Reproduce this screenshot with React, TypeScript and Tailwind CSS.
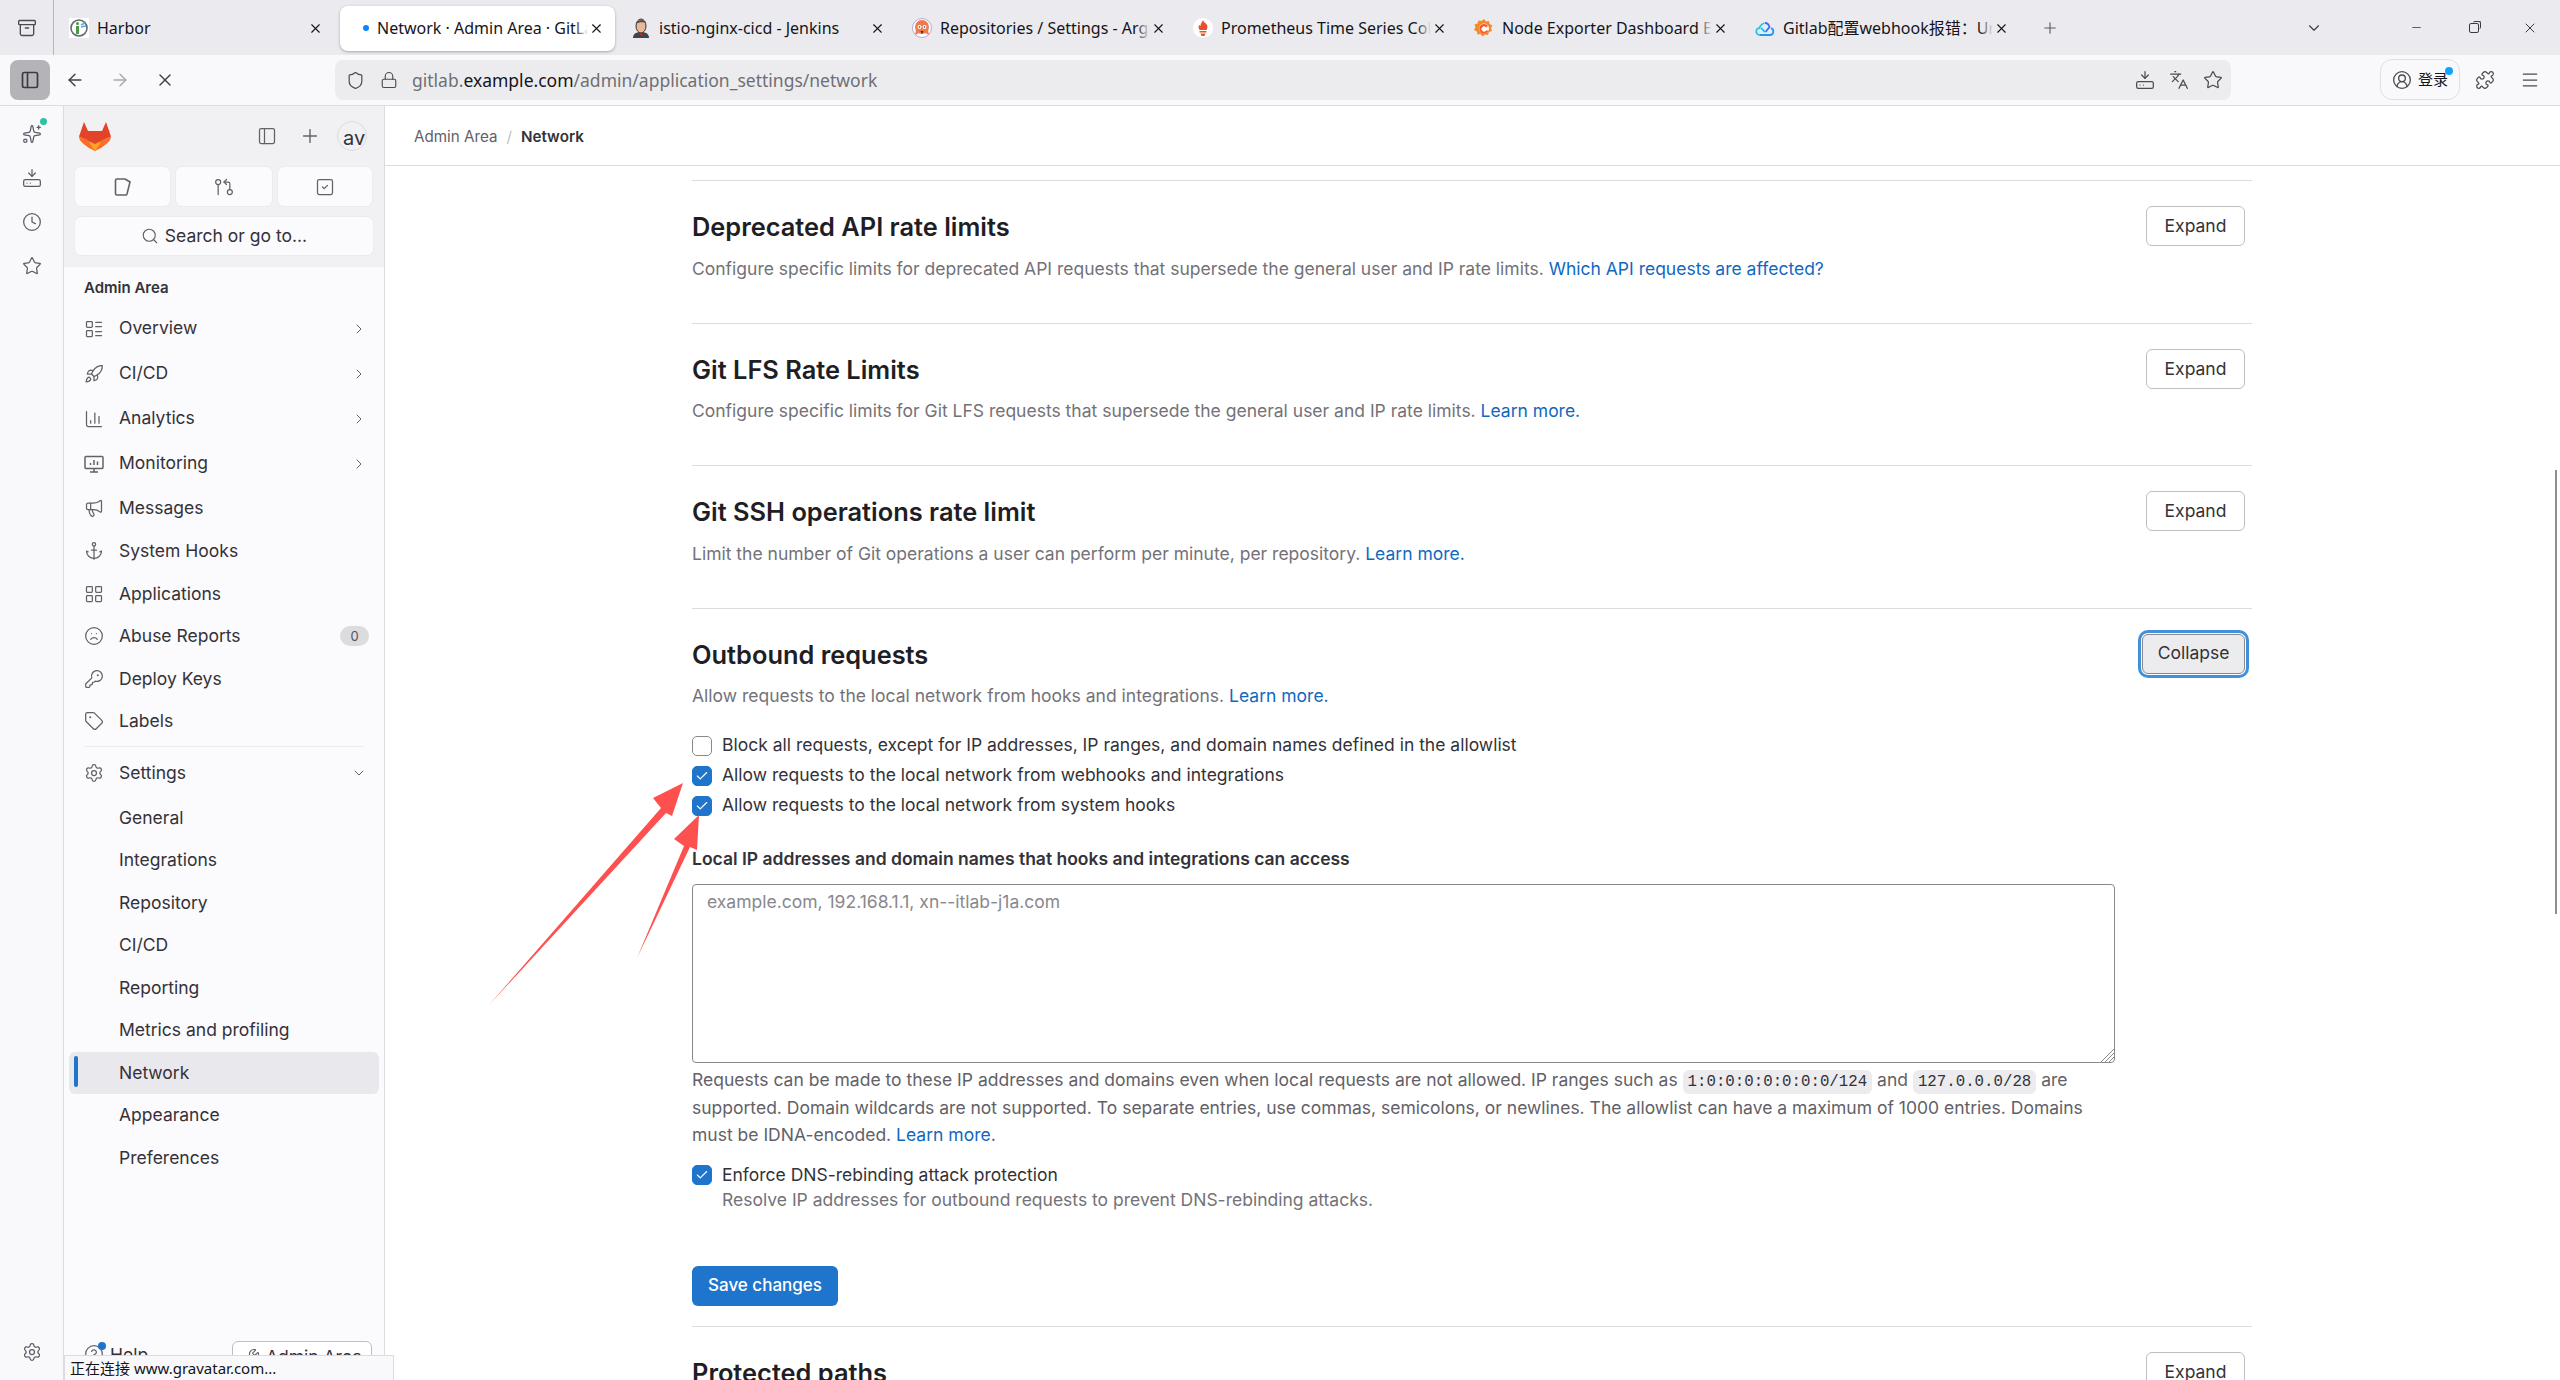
import React from 'react';
import {
  Anchor, Archive, ArrowLeft, ArrowRight, ChevronDown, ChevronRight, CircleUserRound, Clock, Frown,
  GitPullRequestArrow, HardDriveDownload, KeyRound, Languages, LayoutGrid, LayoutList, Lock, Megaphone,
  Menu, Minus, PanelLeft, Plus, Puzzle, Rocket, Search, Settings, Shield, Sparkles, SquareCheck,
  Star, Tag, X, ChartColumn, Check, Wrench, CircleHelp,
} from 'lucide-react';

const chrome = 'font-["Noto_Sans","Noto_Sans_CJK_SC",sans-serif]';

/* ---- tab favicons ---- */
const HarborIcon = () => (
  <svg width="20" height="20" viewBox="0 0 20 20" className="bg-white">
    <circle cx="10" cy="10" r="8" fill="none" stroke="#5f6b6b" strokeWidth="1.6" />
    <rect x="7" y="8" width="3" height="8" fill="#4b9a45" />
    <circle cx="8.5" cy="5.5" r="1.5" fill="#4b9a45" />
    <path d="M12 7l4-2M12 9l5-1" stroke="#60a9dc" strokeWidth="1.5" />
  </svg>
);
const JenkinsIcon = () => (
  <svg width="20" height="20" viewBox="0 0 20 20">
    <path d="M2 20c0-4 3-6 8-6s8 2 8 6z" fill="#3d4650" />
    <ellipse cx="10" cy="8" rx="5" ry="7" fill="#e8b89a" stroke="#3a3230" strokeWidth="1" />
    <path d="M5 6c1-4 8-6 10-1-3-1-7-1-10 1z" fill="#5a4c46" />
    <path d="M8 15l4 1-1 2-2-1z" fill="#c0282c" />
  </svg>
);
const ArgoIcon = () => (
  <svg width="20" height="20" viewBox="0 0 20 20">
    <circle cx="10" cy="10" r="9.5" fill="#fff" stroke="#b4a8d8" strokeWidth="1" />
    <circle cx="10" cy="9" r="7" fill="#ef7b4d" />
    <path d="M4 12l-1 5 4-2zM16 12l1 5-4-2z" fill="#ef7b4d" />
    <circle cx="7.5" cy="9" r="2" fill="#fff" />
    <circle cx="12.5" cy="9" r="2" fill="#fff" />
    <circle cx="7.5" cy="9" r="0.8" fill="#333" />
    <circle cx="12.5" cy="9" r="0.8" fill="#333" />
    <path d="M8.5 13h3l-1.5 3z" fill="#333" />
  </svg>
);
const PrometheusIcon = () => (
  <svg width="20" height="20" viewBox="0 0 20 20">
    <circle cx="10" cy="10" r="10" fill="#fff" />
    <path d="M10 2c1 3 3 3 4 5 1 2 0 4-.5 5h-7c-.5-1-1.5-3-.5-5l1.500 1c0-3 2-4 2.500-6z" fill="#e6522c" />
    <rect x="6.500" y="13" width="7" height="1.500" fill="#e6522c" />
    <path d="M7.500 15.500h5l-1 2.500h-3z" fill="#e6522c" />
  </svg>
);
const GrafanaIcon = () => (
  <svg width="20" height="20" viewBox="0 0 20 20">
    <path d="M10 1l2 2.500 3-.5.500 3 3 1.500-1.500 2.500 1 3-3 1-1 3-3-.5-2.500 2-2-2.500-3 .5-.5-3-3-1.500 1.500-3-1-2.500 3-1 1-3 3 .5z" fill="#f28a2b" />
    <circle cx="10" cy="10.500" r="5" fill="#fff" />
    <path d="M14 8a4.800 4.800 0 1 0 .5 4.500h-2.500a2.500 2.500 0 1 1 0-3z" fill="#f4592e" />
  </svg>
);
const CloudIcon = () => (
  <svg width="20" height="20" viewBox="0 0 20 20" fill="none" strokeWidth="1.800">
    <path d="M5 17h10a3.500 3.500 0 0 0 1-6.800" stroke="#1d9bf0" />
    <path d="M5 17a3.500 3.500 0 0 1-.5-7c.5-2 2-4 5-5" stroke="#27c4e8" />
    <path d="M10 5c2.500 0 4 2 4.500 4l-4 5" stroke="#3f6df0" />
    <path d="M6 10l4 4" stroke="#27c4e8" />
  </svg>
);

const GitLabLogo = () => (
  <svg width="32" height="30" viewBox="0 0 32 30">
    <path d="M0 15.500C0 19 3 22 6 24l4 3 6 3 6-3 4-3c3-2 6-5 6-8.500l-8 3.500-8 3-8-3z" fill="#fc6d26" />
    <path d="M8 19l8 4 8-4-2 5-6 6-6-6z" fill="#fc6d26" />
    <path d="M10 21.500l6-3 6 3-6 8.500z" fill="#fca326" />
    <path d="M0 15.500L5 1l4 9h14l4-9 5 14.500-8 3.500-8 4-8-4z" fill="#e24329" />
  </svg>
);

const MonitoringIcon = ({ className }: { className?: string }) => (
  <svg viewBox="0 0 20 20" fill="none" stroke="currentColor" strokeWidth="1.500" className={className}>
    <rect x="1" y="2.500" width="18" height="12" rx="1" />
    <path d="M10 14.500v3.500M6 18h8M6.500 11V9M10 11V6M13.500 11V7.500" />
  </svg>
);

/* ---- data ---- */
const tabs = [
  { title: 'Harbor', icon: <HarborIcon /> },
  { title: 'Network · Admin Area · GitLab', active: true },
  { title: 'istio-nginx-cicd - Jenkins', icon: <JenkinsIcon /> },
  { title: 'Repositories / Settings - Argo CD', icon: <ArgoIcon /> },
  { title: 'Prometheus Time Series Collection', icon: <PrometheusIcon /> },
  { title: 'Node Exporter Dashboard EN', icon: <GrafanaIcon /> },
  { title: 'Gitlab配置webhook报错：Url is blocked', icon: <CloudIcon /> },
];

const navItems = [
  { label: 'Overview', icon: LayoutList, chevron: true },
  { label: 'CI/CD', icon: Rocket, chevron: true },
  { label: 'Analytics', icon: ChartColumn, chevron: true },
  { label: 'Monitoring', icon: MonitoringIcon, chevron: true },
  { label: 'Messages', icon: Megaphone, h: 'h-[44px]' },
  { label: 'System Hooks', icon: Anchor },
  { label: 'Applications', icon: LayoutGrid },
  { label: 'Abuse Reports', icon: Frown, badge: '0' },
  { label: 'Deploy Keys', icon: KeyRound },
  { label: 'Labels', icon: Tag },
];

const settingsItems = ['General', 'Integrations', 'Repository', 'CI/CD', 'Reporting', 'Metrics and profiling', 'Network', 'Appearance', 'Preferences'];

const sections = [
  { title: 'Deprecated API rate limits', text: 'Configure specific limits for deprecated API requests that supersede the general user and IP rate limits. ', link: 'Which API requests are affected?' },
  { title: 'Git LFS Rate Limits', text: 'Configure specific limits for Git LFS requests that supersede the general user and IP rate limits. ', link: 'Learn more.' },
  { title: 'Git SSH operations rate limit', text: 'Limit the number of Git operations a user can perform per minute, per repository. ', link: 'Learn more.' },
];

/* ---- browser chrome ---- */
const TabBar = () => (
  <div className={`flex h-[55px] shrink-0 bg-[#ebebef] ${chrome}`}>
    <div className="flex w-[54px] shrink-0 items-center justify-center border-r border-[#b8b8bc]">
      <Archive className="h-[20px] w-[20px] text-[#4a4a50]" strokeWidth={1.6} />
    </div>
    <div className="flex pl-[2px]">
      {tabs.map((t) => (
        <div key={t.title} className="flex h-[55px] w-[281px] items-center px-[3px] pt-[1px]">
          <div className={`flex h-[45px] w-[275px] items-center rounded-lg pr-[11px] ${t.active ? 'bg-white pl-[23px] shadow-[0_1px_3px_rgba(0,0,0,0.3)]' : 'pl-[10px]'}`}>
            {t.active ? (
              <span className="mr-[8px] h-[6px] w-[6px] shrink-0 rounded-full bg-[#0a84ff]" />
            ) : (
              <span className="mr-[8px] flex h-[20px] w-[20px] shrink-0 items-center justify-center">{t.icon}</span>
            )}
            <span className="relative flex-1 overflow-hidden whitespace-nowrap text-[16px] text-[#15141a]">
              {t.title}
              <span className={`absolute right-0 top-0 h-full w-[14px] bg-gradient-to-r from-transparent ${t.active ? 'to-white' : 'to-[#ebebef]'}`} />
            </span>
            <X className="ml-[1px] h-[15px] w-[15px] shrink-0 text-[#15141a]" strokeWidth={1.800} />
          </div>
        </div>
      ))}
    </div>
    <Plus className="ml-[18px] mt-[19px] h-[18px] w-[18px] text-[#5b5b66]" strokeWidth={1.500} />
    <div className="flex flex-1 items-center pl-[246px] text-[#3a3a40]">
      <ChevronDown className="h-[18px] w-[18px]" strokeWidth={1.500} />
      <Minus className="ml-[87px] h-[13px] w-[13px]" strokeWidth={1.500} />
      <div className="relative ml-[46px] h-[10px] w-[10px] rounded-[2px] border border-[#3a3a40]">
        <span className="absolute -right-[3px] -top-[3px] h-[8px] w-[8px] rounded-[2px] border-r border-t border-[#3a3a40]" />
      </div>
      <X className="ml-[43px] h-[16px] w-[16px]" strokeWidth={1.500} />
    </div>
  </div>
);

const ToolBar = () => (
  <div className={`flex h-[51px] shrink-0 items-start border-b border-[#dcdce0] bg-[#f9f9fb] pt-[5px] ${chrome}`}>
    <div className="ml-[10px] flex h-[40px] w-[40px] items-center justify-center rounded-lg bg-[#b4b4b8]">
      <PanelLeft className="h-[20px] w-[20px] text-[#3a3a40]" strokeWidth={2} />
    </div>
    <div className="flex h-[40px] items-center text-[#3f3f46]">
      <ArrowLeft className="ml-[15px] h-[20px] w-[20px]" strokeWidth={1.700} />
      <ArrowRight className="ml-[25px] h-[20px] w-[20px] text-[#a8a8ae]" strokeWidth={1.700} />
      <X className="ml-[25px] h-[20px] w-[20px]" strokeWidth={1.700} />
    </div>
    <div className="ml-[160px] flex h-[40px] w-[1896px] items-center rounded-lg bg-[#ececef] pl-[11px] pr-[8px] text-[17.500px]">
      <Shield className="h-[19px] w-[19px] text-[#4a4a50]" strokeWidth={1.500} />
      <Lock className="ml-[15px] h-[18px] w-[18px] text-[#4a4a50]" strokeWidth={1.500} />
      <span className="ml-[14px] whitespace-nowrap text-[#6f6f76]">
        gitlab.<span className="text-[#15141a]">example.com</span>/admin/application_settings/network
      </span>
      <div className="ml-auto flex items-center gap-[14px] text-[#4a4a50]">
        <HardDriveDownload className="h-[20px] w-[20px]" strokeWidth={1.500} />
        <Languages className="h-[20px] w-[20px]" strokeWidth={1.500} />
        <Star className="h-[20px] w-[20px]" strokeWidth={1.500} />
      </div>
    </div>
    <div className="relative ml-[149px] flex h-[41px] w-[80px] -translate-y-[1px] items-center justify-center gap-[6px] rounded-xl border border-[#e0e0e4] text-[15px] text-[#15141a]">
      <CircleUserRound className="h-[20px] w-[20px] text-[#4a4a50]" strokeWidth={1.600} />
      <span>登录</span>
      <span className="absolute right-[6px] top-[7px] h-[8px] w-[8px] rounded-full bg-[#0ea5ff]" />
    </div>
    <Puzzle className="ml-[15px] mt-[10px] h-[20px] w-[20px] text-[#4a4a50]" strokeWidth={1.500} />
    <Menu className="ml-[25px] mt-[10px] h-[20px] w-[20px] text-[#4a4a50]" strokeWidth={1.500} />
  </div>
);

const Rail = () => (
  <div className="flex w-[64px] shrink-0 flex-col items-center justify-between border-r border-[#dcdce0] bg-[#f9f9fb] pb-[18px] pt-[18px] text-[#5b5b66]">
    <div className="flex flex-col items-center gap-[24px]">
      <div className="relative">
        <Sparkles className="h-[20px] w-[20px]" strokeWidth={1.500} />
        <span className="absolute -right-[5px] -top-[6px] h-[7px] w-[7px] rounded-full bg-[#2ac3a2]" />
      </div>
      <HardDriveDownload className="h-[20px] w-[20px]" strokeWidth={1.500} />
      <Clock className="h-[20px] w-[20px]" strokeWidth={1.500} />
      <Star className="h-[20px] w-[20px]" strokeWidth={1.500} />
    </div>
    <Settings className="h-[20px] w-[20px]" strokeWidth={1.500} />
  </div>
);

/* ---- gitlab sidebar ---- */
const SideBar = () => (
  <div className="relative flex w-[321px] shrink-0 flex-col overflow-hidden border-r border-[#dcdcde] bg-[#fbfafd] font-['Inter',sans-serif]">
    <div className="h-[161px] shrink-0 bg-[#f1f1f4] px-[11px] pt-[15px]">
      <div className="flex h-[30px] items-center pl-[4px]">
        <GitLabLogo />
        <PanelLeft className="ml-[146px] h-[20px] w-[20px] text-[#626168]" strokeWidth={1.500} />
        <Plus className="ml-[22px] h-[22px] w-[22px] text-[#626168]" strokeWidth={1.500} />
        <div className="ml-[16px] h-[30px] w-[30px] overflow-hidden whitespace-nowrap rounded-full border border-[#dcdcde] pl-[5px] pt-[3px] text-[20px] leading-[26px] text-[#333238]">av</div>
      </div>
      <div className="mt-[16px] flex gap-[6px]">
        <div className="flex h-[39px] w-[95px] items-center justify-center rounded-md bg-[#fbfafd] text-[#626168] shadow-[0_0_0_1px_#ececef]">
          <svg width="18" height="20" viewBox="0 0 18 20" fill="none" stroke="currentColor" strokeWidth="1.600"><path d="M3 2h8l5 3-3 12a1.500 1.500 0 0 1-1.500 1H3a1.500 1.500 0 0 1-1.500-1.500v-13A1.500 1.500 0 0 1 3 2z" /></svg>
        </div>
        <div className="flex h-[39px] w-[96px] items-center justify-center rounded-md bg-[#fbfafd] text-[#626168] shadow-[0_0_0_1px_#ececef]">
          <GitPullRequestArrow className="h-[20px] w-[20px]" strokeWidth={1.500} />
        </div>
        <div className="flex h-[39px] w-[94px] items-center justify-center rounded-md bg-[#fbfafd] text-[#626168] shadow-[0_0_0_1px_#ececef]">
          <SquareCheck className="h-[20px] w-[20px]" strokeWidth={1.500} />
        </div>
      </div>
      <div className="mt-[11px] flex h-[38px] items-center justify-center gap-[6px] rounded-md bg-[#fbfafd] text-[17.500px] text-[#333238] shadow-[0_0_0_1px_#ececef]">
        <Search className="h-[18px] w-[18px] text-[#626168]" strokeWidth={1.500} />
        Search or go to...
      </div>
    </div>
    <div className="h-[39px] shrink-0 pl-[20px] pt-[10px] text-[15px] font-semibold leading-[22px] text-[#333238]">Admin Area</div>
    <div className="px-[20px] text-[17.500px] text-[#333238]">
      {navItems.map((n) => (
        <div key={n.label} className={`flex items-center ${n.chevron ? 'h-[45px]' : n.h ?? 'h-[42.500px]'}`}>
          <n.icon className="h-[20px] w-[20px] text-[#626168]" strokeWidth={1.500} />
          <span className="ml-[15px]">{n.label}</span>
          {n.chevron && <ChevronRight className="ml-auto mr-[-3px] h-[16px] w-[16px] text-[#626168]" strokeWidth={1.500} />}
          {n.badge && <span className="ml-auto mr-[-5px] flex h-[20px] w-[29px] items-center justify-center rounded-full bg-[#dcdcde] text-[13px] text-[#535158]">{n.badge}</span>}
        </div>
      ))}
      <div className="mt-[3px] border-t border-[#ececef]" />
      <div className="mt-[4px] flex h-[45px] items-center">
        <Settings className="h-[20px] w-[20px] text-[#626168]" strokeWidth={1.500} />
        <span className="ml-[15px]">Settings</span>
        <ChevronDown className="ml-auto mr-[-3px] h-[16px] w-[16px] text-[#626168]" strokeWidth={1.500} />
      </div>
    </div>
    <div className="mt-[1px] px-[5px] text-[17.500px] text-[#333238]">
      {settingsItems.map((s) => (
        <div key={s} className={`relative flex h-[42.500px] items-center pl-[50px] ${s === 'Network' ? 'rounded-md bg-[#e9e8ec]' : ''}`}>
          {s === 'Network' && <span className="absolute left-[5px] top-[4px] h-[31px] w-[4px] rounded-sm bg-[#1f75cb]" />}
          {s}
        </div>
      ))}
    </div>
    <div className="absolute bottom-[6px] left-[20px] flex h-[30px] items-start text-[17.500px] text-[#333238]">
      <CircleHelp className="h-[20px] w-[20px] text-[#626168]" strokeWidth={1.500} />
      <span className="ml-[6px] leading-[22px]">Help</span>
      <span className="absolute left-[14px] -top-[2px] h-[8px] w-[8px] rounded-full bg-[#1f75cb]" />
    </div>
    <div className="absolute bottom-[0px] left-[168px] flex h-[39px] w-[140px] items-start justify-center gap-[6px] rounded-md border border-[#bfbfc3] bg-white pt-[2px] text-[17.500px] text-[#333238]">
      <Wrench className="mt-[4px] h-[18px] w-[18px] text-[#626168]" strokeWidth={1.500} />
      Admin Area
    </div>
  </div>
);

/* ---- main content ---- */
const Link = ({ children }: { children: React.ReactNode }) => <a className="text-[#1068bf]">{children}</a>;

const CheckBox = ({ checked }: { checked?: boolean }) => (
  <span className={`flex h-[20px] w-[20px] shrink-0 items-center justify-center rounded-[5px] border ${checked ? 'border-[#1f75cb] bg-[#1f75cb]' : 'border-[#89888d] bg-white'}`}>
    {checked && <Check className="h-[14px] w-[14px] text-white" strokeWidth={2} />}
  </span>
);

const ExpandButton = ({ label = 'Expand' }: { label?: string }) => (
  <button className="mr-[7px] h-[40px] w-[99px] rounded-md border border-[#bfbfc3] bg-white pt-[1px] text-[17.500px] text-[#333238]">{label}</button>
);

const Code = ({ children }: { children: React.ReactNode }) => (
  <code className="rounded-md bg-[#ececef] px-[5px] py-[3px] font-['Liberation_Mono',monospace] text-[15.750px] text-[#333238]">{children}</code>
);

const Row = ({ checked, children }: { checked?: boolean; children: React.ReactNode }) => (
  <div className="flex h-[30px] items-center gap-[10px] text-[17.500px] text-[#333238]">
    <CheckBox checked={checked} />
    <span>{children}</span>
  </div>
);

const Title = ({ children }: { children: React.ReactNode }) => (
  <h2 className="pt-[5px] text-[25.400px] font-semibold leading-[32px] text-[#1f1e24]">{children}</h2>
);

const Main = () => (
  <div className="relative min-w-0 flex-1 overflow-hidden bg-white font-['Inter',sans-serif]">
    <div className="flex h-[60px] items-center border-b border-[#dcdcde] pl-[29px] pt-[3px] text-[15.200px]">
      <span className="text-[#626168]">Admin Area</span>
      <span className="mx-[9px] text-[#bfbfc3]">/</span>
      <span className="font-semibold text-[#333238]">Network</span>
    </div>
    <div className="ml-[307px] mt-[14px] w-[1560px]">
      {sections.map((s) => (
        <div key={s.title} className="h-[142.500px] border-t border-[#dcdcde] pt-[25px]">
          <div className="flex items-start justify-between">
            <Title>{s.title}</Title>
            <ExpandButton />
          </div>
          <p className="mt-[10.500px] text-[17.500px] leading-[24px] text-[#737278]">{s.text}<Link>{s.link}</Link></p>
        </div>
      ))}
      <div className="border-t border-[#dcdcde] pt-[25px]">
        <div className="flex items-start justify-between">
          <Title>Outbound requests</Title>
          <button className="mr-[7px] h-[40px] w-[103px] rounded-md border border-[#89888d] bg-[#ececef] text-[17.500px] text-[#333238] outline-[3px] outline-offset-[1px] outline-[#428fdc]">Collapse</button>
        </div>
        <p className="mt-[10px] text-[17.500px] leading-[24px] text-[#737278]">Allow requests to the local network from hooks and integrations. <Link>Learn more.</Link></p>
        <div className="mt-[23px]">
          <Row>Block all requests, except for IP addresses, IP ranges, and domain names defined in the allowlist</Row>
          <Row checked>Allow requests to the local network from webhooks and integrations</Row>
          <Row checked>Allow requests to the local network from system hooks</Row>
        </div>
        <div className="w-[1423px]">
          <div className="mt-[26px] text-[17.500px] font-semibold leading-[24px] text-[#333238]">Local IP addresses and domain names that hooks and integrations can access</div>
          <div className="relative mt-[13px] h-[179px] rounded-[4px] border-[1.500px] border-[#89888d] bg-white pl-[14px] pt-[5px] text-[17.500px] leading-[24px] text-[#89888d]">
            example.com, 192.168.1.1, xn--itlab-j1a.com
            <svg width="14" height="14" viewBox="0 0 14 14" className="absolute bottom-0 right-0" stroke="#89888d" strokeWidth="1"><path d="M1 14L14 1M5 14L14 5M9 14l5-5" /></svg>
          </div>
          <p className="mt-[4px] text-[17.500px] leading-[26.500px] text-[#626168]">
            Requests can be made to these IP addresses and domains even when local requests are not allowed. IP ranges such as <Code>1:0:0:0:0:0:0:0/124</Code> and <Code>127.0.0.0/28</Code> are supported. Domain wildcards are not supported. To separate entries, use commas, semicolons, or newlines. The allowlist can have a maximum of 1000 entries. Domains must be IDNA-encoded. <Link>Learn more.</Link>
          </p>
          <div className="mt-[12px]">
            <Row checked>Enforce DNS-rebinding attack protection</Row>
            <div className="pl-[30px] text-[17.500px] leading-[20px] text-[#737278]">Resolve IP addresses for outbound requests to prevent DNS-rebinding attacks.</div>
          </div>
          <button className="mt-[56px] h-[40px] w-[146px] rounded-md bg-[#1f75cb] text-[17px] font-medium text-white">Save changes</button>
        </div>
        <div className="mt-[20px] border-t border-[#dcdcde] pt-[25px]">
          <div className="flex items-start justify-between">
            <Title>Protected paths</Title>
            <ExpandButton />
          </div>
        </div>
      </div>
    </div>
    {/* page scrollbar */}
    <div className="absolute right-[3px] top-[364px] h-[444px] w-[2px] bg-[#8f8f8f]" />
  </div>
);

export default function App() {
  return (
    <div className="relative flex h-[1380px] w-[2560px] flex-col overflow-hidden">
      <TabBar />
      <ToolBar />
      <div className="flex min-h-0 flex-1">
        <Rail />
        <SideBar />
        <Main />
      </div>
      {/* status tooltip */}
      <div className={`absolute bottom-0 left-[64px] flex h-[25px] w-[330px] items-center border-l border-t border-r border-[#dcdce0] bg-[#f9f9fb] pl-[5px] text-[15px] text-[#15141a] ${chrome}`}>
        正在连接 www.gravatar.com...
      </div>
      {/* red annotation arrows */}
      <svg className="pointer-events-none absolute left-0 top-0" width="2560" height="1380" viewBox="0 0 2560 1380">
        <polygon points="489,1005 661,808 653,798 683,783 672,816 666,813" fill="#ff5050" />
        <polygon points="637,958 684,846 674,839 699,815 697,850 690,847" fill="#ff5050" />
      </svg>
    </div>
  );
}
